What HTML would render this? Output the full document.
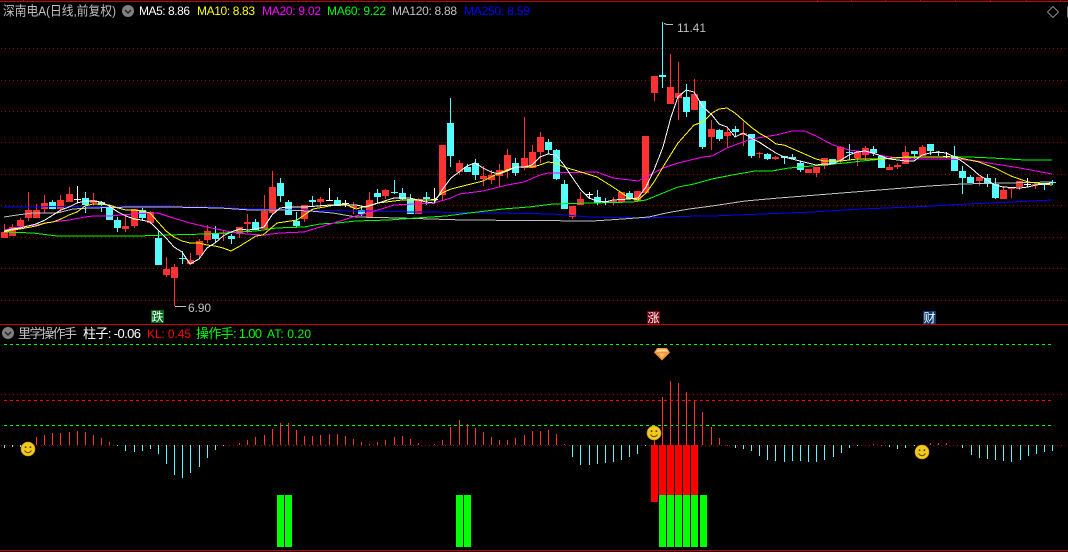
<!DOCTYPE html>
<html><head><meta charset="utf-8"><style>
html,body{margin:0;padding:0;background:#000;width:1068px;height:552px;overflow:hidden}
svg{display:block}
text{font-family:"Liberation Sans","WenQuanYi Zen Hei","Noto Sans CJK SC",sans-serif;font-size:12px}
.c{font-size:13px}
</style></head><body>
<svg width="1068" height="552" viewBox="0 0 1068 552" xmlns="http://www.w3.org/2000/svg">
<rect width="1068" height="552" fill="#000"/>
<g shape-rendering="crispEdges" fill="none">
<g stroke="#c80000">
<path d="M0 1.5H1068M0 324.5H1068M0 550.5H1068"/>
<path d="M23.5 0V1M817.5 0V1M851.5 0V1M885.5 0V1M920.5 0V1M955.5 0V1M990.5 0V1M1026.5 0V1M1060.5 0V1"/>
</g>
<path stroke="#a00000" stroke-dasharray="1 3" d="M1 48.5H1068M1 80.5H1068M1 111.5H1068M1 142.5H1068M1 174.5H1068M1 205.5H1068M1 237.5H1068M1 268.5H1068M1 300.5H1068M1 394.5H1068M1 445.5H1068"/>
<path stroke="#00ff00" stroke-dasharray="3 3" d="M4 344.5H1051M4 425.5H1051"/>
<path stroke="#ff0000" stroke-dasharray="3 3" d="M4 400.5H1051"/>

<!-- candle wicks -->
<path stroke="#ff3232" d="M4.5 224V238M12.5 224V236M20.5 218V229M28.5 192V221M36.5 204V218M44.5 195V213M60.5 195V213M69.5 187V202M93.5 193V205M125.5 216V232M134.5 209V228M150.5 211V224M166.5 257V277M174.5 264V306M190.5 253V265M199.5 239V258M207.5 225V243M223.5 231V241M239.5 227V238M247.5 214V233M264.5 195V229M272.5 171V215M304.5 205V222M320.5 197V207M353.5 202V214M369.5 192V218M385.5 189V199M418.5 198V214M442.5 145V201M459.5 160V175M483.5 166V186M491.5 170V184M499.5 164V187M507.5 149V178M524.5 117V170M532.5 145V168M540.5 132V163M572.5 206V219M580.5 192V205M613.5 197V205M621.5 192V202M637.5 191V201M645.5 136V193M654.5 76V101M670.5 54V104M678.5 62V120M694.5 79V110M711.5 120V150M727.5 127V147M743.5 122V146M759.5 152V158M775.5 156V160M808.5 169V173M816.5 167V177M824.5 158V169M840.5 146V164M857.5 151V166M865.5 146V160M889.5 164V170M897.5 163V169M905.5 146V164M922.5 145V156M979.5 177V186M1003.5 186V199M1011.5 188V198M1019.5 181V190M1035.5 184V189"/>
<path stroke="#54fcfc" d="M52.5 200V209M85.5 192V213M101.5 201V212M109.5 205V220M117.5 217V232M142.5 208V221M158.5 230V265M182.5 251V264M215.5 226V243M231.5 234V244M255.5 219V230M280.5 178V202M288.5 200V215M296.5 212V227M312.5 196V207M337.5 197V206M361.5 206V216M377.5 189V203M394.5 180V194M402.5 188V200M410.5 194V214M426.5 192V205M450.5 98V167M467.5 164V172M475.5 159V180M515.5 158V176M548.5 139V154M556.5 149V180M564.5 180V209M597.5 190V205M605.5 198V205M629.5 191V199M662.5 22V88M686.5 84V117M702.5 101V149M719.5 129V141M735.5 126V137M751.5 134V158M767.5 153V160M784.5 156V164M792.5 154V159M800.5 161V172M832.5 159V164M849.5 144V160M873.5 146V156M881.5 156V168M914.5 151V159M930.5 144V155M938.5 151V156M954.5 146V171M962.5 166V194M970.5 175V183M987.5 174V187M995.5 178V199M1044.5 183V190M1052.5 180V185"/>
<path stroke="#ffffff" d="M77.5 186V203M329.5 188V201M345.5 200V207M434.5 188V203M589.5 192V199M946.5 152V158M1027.5 178V187"/>
<!-- candle bodies -->
<path stroke="#ff3232" stroke-width="7" d="M4.5 232V238M12.5 227V236M20.5 220V226M28.5 210V218M36.5 210V218M44.5 203V209M60.5 200V209M69.5 194V202M93.5 200V203M125.5 226V229M134.5 209V226M150.5 212V223M166.5 269V275M174.5 267V278M190.5 260V264M199.5 241V255M207.5 231V240M223.5 233V234M239.5 227V234M247.5 222V224M264.5 211V229M272.5 187V213M304.5 205V219M320.5 199V202M353.5 206V208M369.5 200V218M385.5 190V196M418.5 199V214M442.5 145V195M459.5 163V172M483.5 176V179M491.5 175V180M499.5 170V176M507.5 155V170M524.5 158V168M532.5 152V168M540.5 137V152M572.5 206V217M580.5 199V205M613.5 201V202M621.5 192V202M637.5 191V201M645.5 136V193M654.5 76V93M670.5 87V104M678.5 93V98M694.5 94V110M711.5 129V137M727.5 132V136M743.5 133V135M759.5 153V154M775.5 157V159M808.5 169V173M816.5 167V173M824.5 158V166M840.5 147V161M857.5 152V158M865.5 148V155M889.5 167V170M897.5 165V167M905.5 152V164M922.5 147V156M979.5 177V181M1003.5 190V199M1011.5 188V189M1019.5 181V187M1035.5 184V185"/>
<path stroke="#54fcfc" stroke-width="7" d="M52.5 202V209M85.5 198V205M101.5 202V205M109.5 206V220M117.5 220V228M142.5 210V218M158.5 238V265M182.5 258V259M215.5 233V239M231.5 236V239M255.5 222V230M280.5 183V196M288.5 202V215M296.5 221V226M312.5 200V202M337.5 200V206M361.5 210V214M377.5 193V197M394.5 192V193M402.5 193V199M410.5 199V214M426.5 197V199M450.5 123V156M467.5 167V172M475.5 163V175M515.5 163V173M548.5 142V150M556.5 150V179M564.5 184V209M597.5 197V203M605.5 201V203M629.5 193V199M662.5 75V77M686.5 97V112M702.5 101V147M719.5 130V139M735.5 129V132M751.5 134V156M767.5 154V159M784.5 156V158M792.5 157V159M800.5 163V170M832.5 159V164M849.5 152V153M873.5 149V153M881.5 156V168M914.5 151V154M930.5 144V151M938.5 152V153M954.5 156V171M962.5 171V178M970.5 177V183M987.5 178V183M995.5 184V198M1044.5 183V185M1052.5 182V183"/>
<path stroke="#ffffff" stroke-width="7" d="M77.5 199V200M329.5 200V201M345.5 203V204M434.5 199V200M589.5 194V195M946.5 156V157M1027.5 184V185"/>

<!-- MA lines -->
<polyline stroke="#0000ff" points="4,207 167,206 187,207 207,207 253,209 300,210 356,211 423,212 496,213 553,214 589,217 649,218 666,217 699,216 712,216 762,214 812,212 862,209 912,207 969,204 1012,202 1052,200"/>
<polyline stroke="#c0c0c0" points="4,217 17,215 33,213 57,213 73,209 90,208 133,207 170,207 220,208 250,210 283,210 310,211 333,213 356,217 399,218 463,220 593,221 623,219 649,217 666,213 689,209 712,206 745,201 779,198 829,194 879,190 929,186 962,184 1005,183 1052,182"/>
<polyline stroke="#00ff00" points="4,232 33,233 57,236 138,236 167,235 207,234 256,231 276,228 304,227 320,224 337,223 356,221 389,220 416,218 446,216 469,213 503,209 529,207 553,204 633,202 646,200 663,193 678,187 694,184 712,179 732,175 755,171 772,171 789,168 812,166 845,163 862,161 895,158 929,157 969,157 992,158 1025,160 1052,160"/>
<polyline stroke="#ff00ff" points="4,230 20,227 36,225 52,222 69,220 85,217 93,216 109,216 133,214 150,213 158,213 173,218 190,223 207,227 231,232 247,234 264,235 280,233 304,232 320,227 337,222 356,216 378,210 394,205 434,203 451,198 459,194 483,191 507,185 524,182 540,175 548,173 597,172 613,178 638,181 646,177 663,168 678,163 703,157 712,156 727,148 751,139 776,135 792,131 805,131 816,136 833,145 849,150 865,152 889,157 914,159 945,159 971,160 995,164 1020,168 1052,174"/>
<polyline stroke="#ffff00" points="4,232 12,230 20,229 36,226 45,223 53,222 61,219 69,215 77,212 85,206 93,204 101,204 109,205 118,208 126,210 134,210 142,211 150,213 158,222 166,231 174,237 182,241 190,243 199,243 207,245 215,246 223,248 231,251 240,246 248,241 256,236 263,235 277,223 297,220 313,209 335,205 345,204 356,209 378,203 402,200 434,200 442,193 451,189 467,185 483,181 499,173 507,170 516,167 532,167 540,165 548,162 556,163 564,167 581,172 597,177 613,187 629,198 638,200 646,193 654,182 663,167 678,143 694,125 703,122 712,113 719,109 727,108 735,113 743,120 751,127 759,133 768,138 776,144 784,145 800,152 816,159 824,161 841,161 857,159 881,159 906,157 938,157 955,157 979,162 995,168 1011,176 1028,182 1044,184 1052,185"/>
<polyline stroke="#ffffff" points="4,231 12,229 20,228 36,224 45,220 53,215 61,210 69,207 77,203 85,201 93,201 101,202 109,206 118,212 126,216 134,219 142,220 150,222 158,230 166,238 174,247 182,252 190,264 199,259 207,248 215,243 223,236 231,232 240,229 248,230 256,229 264,227 272,215 280,208 288,207 305,207 330,205 356,205 366,207 378,203 394,198 402,198 410,198 426,202 434,203 442,190 451,178 459,172 467,166 475,163 483,168 491,172 499,174 507,171 516,167 524,167 532,165 540,157 548,154 556,155 564,165 572,177 581,190 589,198 597,201 605,202 613,200 629,199 638,198 646,187 654,170 663,147 671,117 678,97 686,90 694,92 703,107 712,115 719,124 727,127 735,137 743,133 751,138 759,142 768,148 776,153 784,157 792,159 800,161 816,165 824,164 833,164 841,160 849,155 857,152 865,151 873,153 881,156 889,159 898,160 906,161 914,161 922,155 930,153 938,152 946,153 955,157 963,162 971,168 979,175 987,180 995,185 1003,187 1020,188 1028,187 1036,185 1044,184 1052,183"/>

<!-- histogram -->
<path stroke="#ff3232" d="M36.5 437V445M44.5 435V445M52.5 433V445M60.5 433V445M69.5 432V445M77.5 431V445M85.5 432V445M93.5 435V445M101.5 438V445M109.5 442V445M239.5 443V445M247.5 440V445M255.5 437V445M264.5 435V445M272.5 429V445M280.5 423V445M288.5 423V445M296.5 430V445M304.5 436V445M312.5 436V445M320.5 435V445M329.5 434V445M337.5 434V445M345.5 436V445M353.5 439V445M361.5 442V445M369.5 444V445M377.5 442V445M385.5 440V445M394.5 437V445M402.5 436V445M410.5 439V445M418.5 443V445M434.5 444V445M442.5 440V445M450.5 427V445M459.5 420V445M467.5 424V445M475.5 428V445M483.5 432V445M491.5 437V445M499.5 440V445M507.5 440V445M515.5 438V445M524.5 435V445M532.5 431V445M540.5 431V445M548.5 430V445M556.5 434V445M564.5 444V445M654.5 440V445M662.5 397V445M670.5 381V445M678.5 383V445M686.5 392V445M694.5 400V445M702.5 412V445M711.5 427V445M719.5 438V445M727.5 445V446M873.5 444V445M881.5 445V446M930.5 443V445M938.5 443V445M946.5 443V445"/>
<path stroke="#54fcfc" d="M4.5 445V448M12.5 445V447M20.5 445V447M117.5 445V446M125.5 445V451M134.5 445V452M142.5 445V451M150.5 445V449M158.5 445V454M166.5 445V464M174.5 445V475M182.5 445V478M190.5 445V473M199.5 445V467M207.5 445V458M215.5 445V450M223.5 445V446M572.5 445V457M580.5 445V465M589.5 445V465M597.5 445V464M605.5 445V463M613.5 445V462M621.5 445V460M629.5 445V457M637.5 445V454M645.5 445V446M735.5 445V448M743.5 445V449M751.5 445V451M759.5 445V456M767.5 445V460M775.5 445V461M784.5 445V462M792.5 445V461M800.5 445V461M808.5 445V462M816.5 445V462M824.5 445V460M833.5 445V457M841.5 445V453M849.5 445V448M857.5 445V446M889.5 445V447M897.5 445V449M905.5 445V448M914.5 445V446M962.5 445V448M971.5 445V455M979.5 445V458M987.5 445V459M995.5 445V460M1003.5 445V461M1011.5 445V462M1020.5 445V460M1028.5 445V456M1036.5 445V454M1044.5 445V452M1052.5 445V451"/>
<g stroke="none">
<path fill="#ff0000" d="M651 445h7v57h-7zM659 445h7v50h-7zM667 445h7v50h-7zM675 445h7v50h-7zM683 445h7v50h-7zM691 445h7v50h-7z"/>
<path fill="#00ff00" d="M277 495h7v52h-7zM285 495h7v52h-7zM456 495h7v52h-7zM464 495h7v52h-7zM659 495h7v52h-7zM667 495h7v52h-7zM675 495h7v52h-7zM683 495h7v52h-7zM691 495h7v52h-7zM700 495h7v52h-7z"/>
<rect x="151" y="310" width="13" height="13" fill="#006a14"/>
<rect x="647" y="311" width="13" height="13" fill="#7a0010"/>
<rect x="923" y="311" width="13" height="13" fill="#0a3c70"/>
</g>
<path stroke="#c0c0c0" d="M175 306.5H186"/>
<path stroke="#c0c0c0" d="M664 23.5L667 24.5H673"/>
<path stroke="#808080" d="M1053 6.5L1058.5 12L1053 17.5L1047.5 12ZM1067.5 6.5V17.5"/>
</g>

<!-- header text -->
<text class="c" x="3" y="15.5" fill="#c0c0c0" textLength="113" lengthAdjust="spacingAndGlyphs">深南电A(日线,前复权)</text>
<circle cx="128" cy="11" r="6" fill="#808080"/><path d="M125 10l3 3 3-3" stroke="#222" stroke-width="1.4" fill="none"/>
<text x="139" y="15" fill="#fff" textLength="51">MA5: 8.86</text>
<text x="197" y="15" fill="#ff0" textLength="58">MA10: 8.83</text>
<text x="262" y="15" fill="#f0f" textLength="59">MA20: 9.02</text>
<text x="327" y="15" fill="#0f0" textLength="59">MA60: 9.22</text>
<text x="392" y="15" fill="#c0c0c0" textLength="65">MA120: 8.88</text>
<text x="464" y="15" fill="#00f" textLength="66">MA250: 8.59</text>

<text x="677" y="32" fill="#c0c0c0" textLength="29">11.41</text>
<text x="188" y="312" fill="#c0c0c0" textLength="23">6.90</text>

<text class="c" x="151.5" y="321" fill="#fff" style="font-size:12px">跌</text>
<text class="c" x="647.5" y="322" fill="#fff" style="font-size:12px">涨</text>
<text class="c" x="923.5" y="322" fill="#fff" style="font-size:12px">财</text>

<circle cx="8" cy="333" r="6" fill="#808080"/><path d="M5 332l3 3 3-3" stroke="#222" stroke-width="1.4" fill="none"/>
<text class="c" x="18" y="338" fill="#c0c0c0" textLength="59">里学操作手</text>
<text class="c" x="83" y="338" fill="#fff" textLength="58">柱子: -0.06</text>
<text x="147" y="338" fill="#f00" textLength="44">KL: 0.45</text>
<text class="c" x="196" y="338" fill="#0f0" textLength="66">操作手: 1.00</text>
<text x="267" y="338" fill="#0f0" textLength="44">AT: 0.20</text>

<!-- gem -->
<path d="M657 348H667L670 352.5L662 360.5L654 352.5Z" fill="#f0963c"/>
<path d="M658 349.5H666L668 351.5H656Z" fill="#ffe0b0"/>
<path d="M659 353.5L662 358L665 353.5Z" fill="#ffc070"/>

<!-- smileys -->
<g><circle cx="28" cy="449" r="7" fill="#f2ca1e" stroke="#c89a10" stroke-width=".6"/><circle cx="25.6" cy="447.2" r=".9" fill="#503c00"/><circle cx="30.4" cy="447.2" r=".9" fill="#503c00"/><path d="M24.5 450.5Q28 455 31.5 450.5" fill="none" stroke="#503c00" stroke-width="1"/></g>
<g><circle cx="654" cy="433" r="7" fill="#f2ca1e" stroke="#c89a10" stroke-width=".6"/><circle cx="651.6" cy="431.2" r=".9" fill="#503c00"/><circle cx="656.4" cy="431.2" r=".9" fill="#503c00"/><path d="M650.5 434.5Q654 439 657.5 434.5" fill="none" stroke="#503c00" stroke-width="1"/></g>
<g><circle cx="922" cy="452" r="7" fill="#f2ca1e" stroke="#c89a10" stroke-width=".6"/><circle cx="919.6" cy="450.2" r=".9" fill="#503c00"/><circle cx="924.4" cy="450.2" r=".9" fill="#503c00"/><path d="M918.5 453.5Q922 458 925.5 453.5" fill="none" stroke="#503c00" stroke-width="1"/></g>
</svg>
</body></html>
